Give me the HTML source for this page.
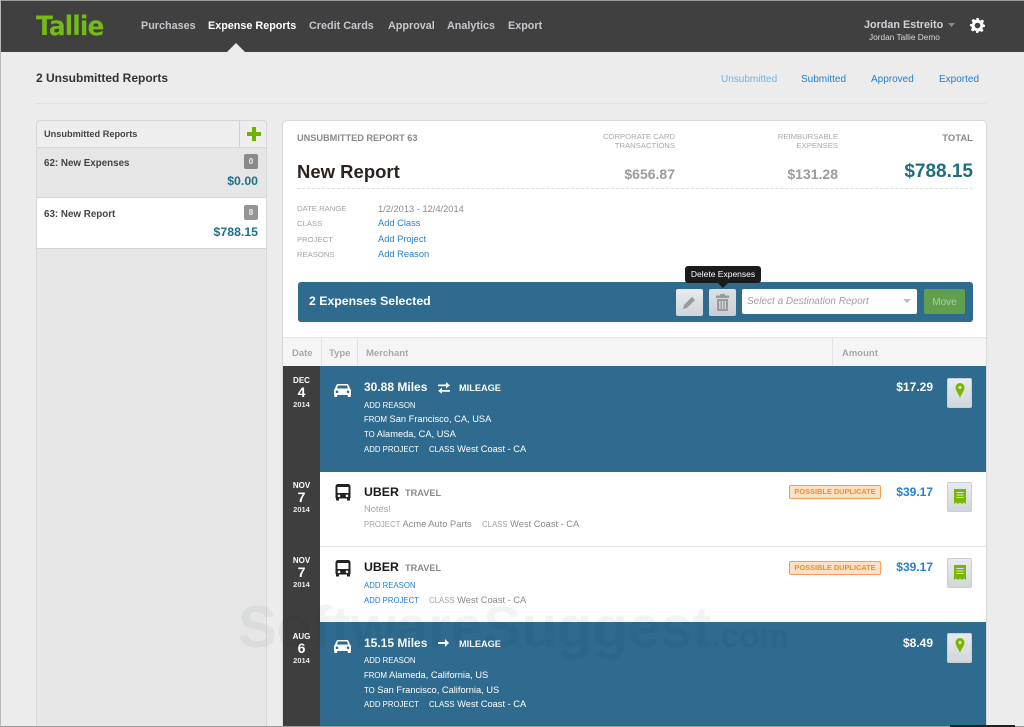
<!DOCTYPE html>
<html><head><meta charset="utf-8"><title>Tallie</title>
<style>
html,body{margin:0;padding:0;width:1024px;height:727px;overflow:hidden}
body{position:relative;background:#ececec;font-family:"Liberation Sans",Arial,sans-serif}
#p{position:absolute;left:0;top:0;width:1024px;height:727px;overflow:hidden;filter:blur(.3px)}
.a{position:absolute}
.t{position:absolute;white-space:nowrap;line-height:14px;height:14px}
.b{font-weight:bold}
.r{text-align:right}
.c{text-align:center}
.nav{top:19px;font-size:10.800px;font-weight:bold;color:#c4c8cc}
.lab{font-size:7.700px;color:#a4a4a4;left:297px}
.val{font-size:9.300px;left:378px}
.lk{color:#2480d4}
.th{font-size:9.500px;font-weight:bold;color:#a8a8a8}
.d1{left:283px;width:37px;text-align:center;font-size:8px;font-weight:bold;color:#fff}
.d2{left:283px;width:37px;text-align:center;font-size:14px;font-weight:bold;color:#fff}
.d3{left:283px;width:37px;text-align:center;font-size:7.500px;font-weight:bold;color:#e8e8e8}
.w{color:#fff}
.sm{font-size:7.800px}
.sm10{font-size:9.300px}
.btn{position:absolute;left:947px;width:25px;height:30px;box-sizing:border-box;border:1px solid #c8d0d6;border-radius:2px;background:linear-gradient(#e8ebed,#d0d6da)}
.badge{position:absolute;left:789px;width:92px;height:14px;box-sizing:border-box;border:1px solid #f0a050;border-radius:2px;background:#fde0c6;color:#ee9030;font-size:7.400px;font-weight:bold;text-align:center;line-height:12px;white-space:nowrap}
.amt{left:850px;width:83px;text-align:right;font-size:12px;font-weight:bold}
.merch{left:364px;font-size:12px;font-weight:bold}
.typ{font-size:9.200px;font-weight:bold}
.g{color:#a4a4a4}
</style></head><body><div id="p">

<!-- top bar -->
<div class="a" style="left:0;top:0;width:1024px;height:52px;background:#404040"></div>
<div class="a" style="left:0;top:0;width:1024px;height:1px;background:#9a9a9a"></div>
<div class="t" style="left:36px;top:9px;height:36px;line-height:36px;font-family:'DejaVu Sans','Liberation Sans',sans-serif;font-weight:bold;font-size:27px;letter-spacing:-1px;color:#76b91a;transform:scaleX(.92);transform-origin:left center">Tallie</div>
<div class="t nav" style="left:141px">Purchases</div>
<div class="t nav" style="left:208px;color:#fff">Expense Reports</div>
<div class="t nav" style="left:309px">Credit Cards</div>
<div class="t nav" style="left:388px">Approval</div>
<div class="t nav" style="left:447px">Analytics</div>
<div class="t nav" style="left:508px">Export</div>
<svg class="a" style="left:227px;top:43px" width="18" height="9"><path d="M0 9 L9 0 L18 9Z" fill="#ececec"/></svg>
<div class="t b" style="left:864px;top:18px;font-size:10.800px;color:#d0d4d8">Jordan Estreito</div>
<svg class="a" style="left:948px;top:23px" width="8" height="5"><path d="M0 0H7L3.500 4Z" fill="#8a8a8a"/></svg>
<div class="t" style="left:869px;top:30px;font-size:8.300px;color:#d8d8d8">Jordan Tallie Demo</div>
<svg class="a" style="left:970px;top:18px" width="15" height="15" viewBox="0 0 24 24"><path fill="#fff" fill-rule="evenodd" d="M10 0h4l.7 3.300 2.200.9L19.800 2.400l2.800 2.800-1.800 2.900.9 2.200L24 11v3l-3.300.7-.9 2.200 1.800 2.900-2.800 2.800-2.900-1.800-2.200.9L13 24h-3l-.7-3.300-2.200-.9-2.900 1.800-2.800-2.800 1.800-2.900-.9-2.200L0 13v-3l3.300-.7.9-2.200-1.800-2.900L5.200 1.400l2.900 1.800 2.200-.9zM12 7.500a4.500 4.500 0 1 0 0 9 4.500 4.500 0 0 0 0-9z"/></svg>

<!-- page heading -->
<div class="t b" style="left:36px;top:71px;font-size:12px;color:#333">2 Unsubmitted Reports</div>
<div class="t" style="left:721px;top:73px;font-size:10px;color:#70b2e2">Unsubmitted</div>
<div class="t" style="left:801px;top:73px;font-size:10px;color:#2480d4">Submitted</div>
<div class="t" style="left:871px;top:73px;font-size:10px;color:#2480d4">Approved</div>
<div class="t" style="left:939px;top:73px;font-size:10px;color:#2480d4">Exported</div>
<div class="a" style="left:36px;top:103px;width:950px;height:1px;background:#e2e2e2"></div>

<!-- sidebar -->
<div class="a" style="left:36px;top:120px;width:231px;height:607px;box-sizing:border-box;border:1px solid #d8d8d8;border-bottom:0;border-radius:4px 4px 0 0;background:#e6e6e6"></div>
<div class="a" style="left:37px;top:121px;width:229px;height:26px;background:#eeeeee;border-bottom:1px solid #d8d8d8;border-radius:4px 4px 0 0"></div>
<div class="a" style="left:239px;top:121px;width:1px;height:26px;background:#d0d0d0"></div>
<div class="t b" style="left:44px;top:127px;font-size:9.200px;color:#444">Unsubmitted Reports</div>
<svg class="a" style="left:247px;top:127px" width="14" height="14"><path d="M5 0h4v5h5v4H9v5H5V9H0V5h5z" fill="#6fb200"/></svg>
<div class="a" style="left:37px;top:197px;width:229px;height:1px;background:#d6d6d6"></div>
<div class="a" style="left:37px;top:198px;width:229px;height:50px;background:#fff;border-bottom:1px solid #d6d6d6"></div>
<div class="t b" style="left:44px;top:157px;font-size:9.800px;color:#444">62: New Expenses</div>
<div class="t b" style="left:44px;top:208px;font-size:9.800px;color:#444">63: New Report</div>
<div class="a" style="left:244px;top:154px;width:14px;height:15px;background:#8a8a8a;border-radius:2px;color:#eee;font-size:8px;font-weight:bold;text-align:center;line-height:15px">0</div>
<div class="a" style="left:244px;top:205px;width:14px;height:15px;background:#949494;border-radius:2px;color:#eee;font-size:8px;font-weight:bold;text-align:center;line-height:15px">8</div>
<div class="t b r" style="left:160px;width:98px;top:174px;font-size:12.300px;color:#1f7186">$0.00</div>
<div class="t b r" style="left:160px;width:98px;top:225px;font-size:12.300px;color:#1f7186">$788.15</div>

<!-- main panel -->
<div class="a" style="left:282px;top:120px;width:705px;height:607px;box-sizing:border-box;border:1px solid #d8d8d8;border-bottom:0;border-radius:5px 5px 0 0;background:#fff"></div>
<div class="t b" style="left:297px;top:131px;font-size:9.200px;color:#8a8a8a">UNSUBMITTED REPORT 63</div>
<div class="t b" style="left:297px;top:162px;height:20px;line-height:20px;font-size:18.500px;color:#2a2320">New Report</div>
<div class="t r" style="left:575px;width:100px;top:132px;height:9px;line-height:9px;font-size:7.700px;color:#aaa">CORPORATE CARD</div>
<div class="t r" style="left:575px;width:100px;top:141px;height:9px;line-height:9px;font-size:7.700px;color:#aaa">TRANSACTIONS</div>
<div class="t r" style="left:738px;width:100px;top:132px;height:9px;line-height:9px;font-size:7.700px;color:#aaa">REIMBURSABLE</div>
<div class="t r" style="left:738px;width:100px;top:141px;height:9px;line-height:9px;font-size:7.700px;color:#aaa">EXPENSES</div>
<div class="t b r" style="left:873px;width:100px;top:132px;font-size:9.500px;color:#8a8a8a">TOTAL</div>
<div class="t b r" style="left:575px;width:100px;top:167px;font-size:14px;color:#9b9b9b">$656.87</div>
<div class="t b r" style="left:738px;width:100px;top:167px;font-size:14px;color:#9b9b9b">$131.28</div>
<div class="t b r" style="left:853px;width:120px;top:162px;height:20px;line-height:20px;font-size:19px;color:#1e6f7c">$788.15</div>
<div class="a" style="left:297px;top:188px;width:676px;border-top:1px dashed #e0e0e0"></div>

<div class="t lab" style="top:202px">DATE RANGE</div>
<div class="t lab" style="top:217px">CLASS</div>
<div class="t lab" style="top:233px">PROJECT</div>
<div class="t lab" style="top:248px">REASONS</div>
<div class="t val" style="top:202px;color:#8c8c8c">1/2/2013 - 12/4/2014</div>
<div class="t val lk" style="top:216px">Add Class</div>
<div class="t val lk" style="top:232px">Add Project</div>
<div class="t val lk" style="top:247px">Add Reason</div>

<!-- selection bar -->
<div class="a" style="left:298px;top:282px;width:675px;height:40px;background:#2e6b8f;border-radius:3px"></div>
<div class="t b" style="left:309px;top:294px;font-size:12.300px;color:#fff">2 Expenses Selected</div>
<div class="a" style="left:676px;top:289px;width:27px;height:27px;border-radius:2px;background:linear-gradient(#e8ebee,#ced4d9)"></div>
<svg class="a" style="left:682px;top:295px" width="15" height="15"><path d="M1 14l1-4 8-8 3 3-8 8z" fill="#9a9a9a"/></svg>
<div class="a" style="left:709px;top:289px;width:27px;height:27px;border-radius:2px;background:linear-gradient(#dde1e5,#c8ced4)"></div>
<svg class="a" style="left:716px;top:294px" width="13" height="17"><path d="M4 0h5v1.500h4V4H0V1.500h4zM1 5h11v12H1zM3.200 7v8h1.300V7zM5.900 7v8h1.300V7zM8.600 7v8h1.300V7z" fill="#9a9a9a" fill-rule="evenodd"/></svg>
<div class="a" style="left:742px;top:289px;width:175px;height:25px;background:#fff;border-radius:2px"></div>
<div class="t" style="left:747px;top:295px;font-size:10px;font-style:italic;color:#a0a0a0">Select a Destination Report</div>
<svg class="a" style="left:903px;top:299px" width="9" height="5"><path d="M0 0h8L4 4z" fill="#bbb"/></svg>
<div class="a" style="left:924px;top:289px;width:41px;height:25px;background:#5f9f4e;border-radius:2px;color:#a9cfa3;font-size:10px;text-align:center;line-height:27px">Move</div>
<div class="a" style="left:685px;top:266px;width:76px;height:17px;background:#1b1b1b;border-radius:3px;color:#fff;font-size:8.500px;text-align:center;line-height:17px">Delete Expenses</div>
<svg class="a" style="left:718px;top:283px" width="10" height="5"><path d="M0 0h10L5 5z" fill="#1b1b1b"/></svg>

<!-- table header -->
<div class="a" style="left:283px;top:337px;width:703px;height:29px;background:#f5f5f5;border-top:1px solid #e6e6e6;box-sizing:border-box"></div>
<div class="a" style="left:321px;top:338px;width:1px;height:28px;background:#e2e2e2"></div>
<div class="a" style="left:357px;top:338px;width:1px;height:28px;background:#e2e2e2"></div>
<div class="a" style="left:832px;top:338px;width:1px;height:28px;background:#e2e2e2"></div>
<div class="t th" style="left:292px;top:347px">Date</div>
<div class="t th" style="left:329px;top:347px">Type</div>
<div class="t th" style="left:366px;top:347px">Merchant</div>
<div class="t th" style="left:842px;top:347px">Amount</div>

<!-- rows bg -->
<div class="a" style="left:283px;top:366px;width:37px;height:361px;background:#3e3e3e"></div>
<div class="a" style="left:320px;top:366px;width:666px;height:106px;background:#2e6b8f"></div>
<div class="a" style="left:320px;top:546px;width:666px;height:1px;background:#e4e4e4"></div>
<div class="a" style="left:320px;top:622px;width:666px;height:105px;background:#2e6b8f"></div>

<!-- row 1 -->
<div class="t d1" style="top:374px">DEC</div>
<div class="t d2" style="top:385px">4</div>
<div class="t d3" style="top:398px">2014</div>
<svg class="a" style="left:334px;top:384px" width="17" height="13" viewBox="0 0 17 13"><path fill="#fff" fill-rule="evenodd" d="M4 0h9c1 0 1.500.6 2 2l1 2.500c.6.5 1 1 1 2V11h-.3v1.500a.5.500 0 0 1-.5.500h-1.900a.5.500 0 0 1-.5-.5V11H3.200v1.500a.5.500 0 0 1-.5.500H.8a.5.500 0 0 1-.5-.5V11H0V6.500c0-1 .4-1.500 1-2L2 2C2.500.6 3 0 4 0zM4 1.500 3 4.500h11l-1-3zM3 6.500a1.300 1.300 0 1 0 0 2.600 1.300 1.300 0 0 0 0-2.600zM14 6.500a1.300 1.300 0 1 0 0 2.600 1.300 1.300 0 0 0 0-2.600z"/></svg>
<div class="t merch w" style="top:380px">30.88 Miles</div>
<svg class="a" style="left:438px;top:381px" width="12" height="13"><path d="M0 3.500h8V1l4 3.500-4 3V5.200H0zM12 9H4V6.800L0 9.800l4 3V10.700h8z" fill="#fff"/></svg>
<div class="t typ w" style="left:459px;top:381px">MILEAGE</div>
<div class="t sm w" style="left:364px;top:399px">ADD REASON</div>
<div class="t w sm10" style="left:364px;top:412px"><span class="sm">FROM</span> San Francisco, CA, USA</div>
<div class="t w sm10" style="left:364px;top:427px"><span class="sm">TO</span> Alameda, CA, USA</div>
<div class="t sm w" style="left:364px;top:443px">ADD PROJECT</div>
<div class="t w sm10" style="left:429px;top:442px"><span class="sm">CLASS</span> West Coast - CA</div>
<div class="t amt w" style="top:380px">$17.29</div>
<div class="btn" style="top:378px"></div>
<svg class="a" style="left:955px;top:383px" width="10" height="15" viewBox="0 0 10 15"><path fill="#7ab800" fill-rule="evenodd" d="M5 0a4.500 4.500 0 0 1 4.500 4.500C9.500 8 6.500 10.500 5 15 3.500 10.500.5 8 .5 4.500A4.500 4.500 0 0 1 5 0zM5 3a1.500 1.500 0 1 0 0 3 1.500 1.500 0 0 0 0-3z"/></svg>

<!-- row 2 -->
<div class="t d1" style="top:479px">NOV</div>
<div class="t d2" style="top:490px">7</div>
<div class="t d3" style="top:503px">2014</div>
<svg class="a" style="left:335px;top:484px" width="16" height="17" viewBox="0 0 16 17"><path fill="#222" fill-rule="evenodd" d="M3 0h10a2.500 2.500 0 0 1 2.500 2.500V14H15v2.500h-3V14.500H4V16.500H1V14H.5V2.500A2.500 2.500 0 0 1 3 0zM2.500 3v6h11V3zM4 10.500a1.300 1.300 0 1 0 0 2.600 1.300 1.300 0 0 0 0-2.600zM12 10.500a1.300 1.300 0 1 0 0 2.600 1.300 1.300 0 0 0 0-2.600z"/></svg>
<div class="t merch" style="top:485px;color:#1a1a1a;font-size:12.300px">UBER</div>
<div class="t typ" style="left:405px;top:486px;color:#8a8a8a">TRAVEL</div>
<div class="t sm10 g" style="left:364px;top:502px">Notes!</div>
<div class="t g sm10" style="left:364px;top:517px"><span class="sm">PROJECT</span> <span style="color:#8a8a8a">Acme Auto Parts</span></div>
<div class="t g sm10" style="left:482px;top:517px"><span class="sm">CLASS</span> <span style="color:#8a8a8a">West Coast - CA</span></div>
<div class="badge" style="top:485px">POSSIBLE DUPLICATE</div>
<div class="t amt lk" style="top:485px">$39.17</div>
<div class="btn" style="top:482px"></div>
<svg class="a" style="left:954px;top:489px" width="12" height="15" viewBox="0 0 12 15"><path fill="#7ab800" fill-rule="evenodd" d="M0 0h12v15l-2-1.500-2 1.500-2-1.500-2 1.500-2-1.500-2 1.500zM2.500 3v1h7V3zM2.500 5.500v1h7v-1zM2.500 8v1h7V8z"/></svg>

<!-- row 3 -->
<div class="t d1" style="top:554px">NOV</div>
<div class="t d2" style="top:565px">7</div>
<div class="t d3" style="top:578px">2014</div>
<svg class="a" style="left:335px;top:560px" width="16" height="17" viewBox="0 0 16 17"><path fill="#222" fill-rule="evenodd" d="M3 0h10a2.500 2.500 0 0 1 2.500 2.500V14H15v2.500h-3V14.500H4V16.500H1V14H.5V2.500A2.500 2.500 0 0 1 3 0zM2.500 3v6h11V3zM4 10.500a1.300 1.300 0 1 0 0 2.600 1.300 1.300 0 0 0 0-2.600zM12 10.500a1.300 1.300 0 1 0 0 2.600 1.300 1.300 0 0 0 0-2.600z"/></svg>
<div class="t merch" style="top:560px;color:#1a1a1a;font-size:12.300px">UBER</div>
<div class="t typ" style="left:405px;top:561px;color:#8a8a8a">TRAVEL</div>
<div class="t sm lk" style="left:364px;top:579px">ADD REASON</div>
<div class="t sm lk" style="left:364px;top:594px">ADD PROJECT</div>
<div class="t g sm10" style="left:429px;top:593px"><span class="sm">CLASS</span> <span style="color:#8a8a8a">West Coast - CA</span></div>
<div class="badge" style="top:561px">POSSIBLE DUPLICATE</div>
<div class="t amt lk" style="top:560px">$39.17</div>
<div class="btn" style="top:558px"></div>
<svg class="a" style="left:954px;top:565px" width="12" height="15" viewBox="0 0 12 15"><path fill="#7ab800" fill-rule="evenodd" d="M0 0h12v15l-2-1.500-2 1.500-2-1.500-2 1.500-2-1.500-2 1.500zM2.500 3v1h7V3zM2.500 5.500v1h7v-1zM2.500 8v1h7V8z"/></svg>

<!-- row 4 -->
<div class="t d1" style="top:630px">AUG</div>
<div class="t d2" style="top:641px">6</div>
<div class="t d3" style="top:654px">2014</div>
<svg class="a" style="left:334px;top:640px" width="17" height="13" viewBox="0 0 17 13"><path fill="#fff" fill-rule="evenodd" d="M4 0h9c1 0 1.500.6 2 2l1 2.500c.6.5 1 1 1 2V11h-.3v1.500a.5.500 0 0 1-.5.500h-1.900a.5.500 0 0 1-.5-.5V11H3.200v1.500a.5.500 0 0 1-.5.500H.8a.5.500 0 0 1-.5-.5V11H0V6.500c0-1 .4-1.500 1-2L2 2C2.500.6 3 0 4 0zM4 1.500 3 4.500h11l-1-3zM3 6.500a1.300 1.300 0 1 0 0 2.600 1.300 1.300 0 0 0 0-2.600zM14 6.500a1.300 1.300 0 1 0 0 2.600 1.300 1.300 0 0 0 0-2.600z"/></svg>
<div class="t merch w" style="top:636px">15.15 Miles</div>
<svg class="a" style="left:438px;top:639px" width="11" height="8"><path d="M0 3h7V0l4 4-4 4V5H0z" fill="#fff"/></svg>
<div class="t typ w" style="left:459px;top:637px">MILEAGE</div>
<div class="t sm w" style="left:364px;top:654px">ADD REASON</div>
<div class="t w sm10" style="left:364px;top:668px"><span class="sm">FROM</span> Alameda, California, US</div>
<div class="t w sm10" style="left:364px;top:683px"><span class="sm">TO</span> San Francisco, California, US</div>
<div class="t sm w" style="left:364px;top:698px">ADD PROJECT</div>
<div class="t w sm10" style="left:429px;top:697px"><span class="sm">CLASS</span> West Coast - CA</div>
<div class="t amt w" style="top:636px">$8.49</div>
<div class="btn" style="top:633px"></div>
<svg class="a" style="left:955px;top:638px" width="10" height="15" viewBox="0 0 10 15"><path fill="#7ab800" fill-rule="evenodd" d="M5 0a4.500 4.500 0 0 1 4.500 4.500C9.500 8 6.500 10.500 5 15 3.500 10.500.5 8 .5 4.500A4.500 4.500 0 0 1 5 0zM5 3a1.500 1.500 0 1 0 0 3 1.500 1.500 0 0 0 0-3z"/></svg>

<!-- watermark -->
<div class="t b" style="left:238px;top:598px;height:60px;line-height:60px;font-size:58px;color:rgba(20,30,40,.055)">SoftwareSuggest<span style="font-size:33px;letter-spacing:0">.com</span></div>

<!-- bottom edge -->
<div class="a" style="left:0;top:726px;width:1024px;height:1px;background:#9a9a9a"></div>
<div class="a" style="left:950px;top:725px;width:65px;height:2px;background:#222"></div>
<div class="a" style="left:0;top:0;width:1px;height:727px;background:#b8b8b8"></div>
</div></body></html>
